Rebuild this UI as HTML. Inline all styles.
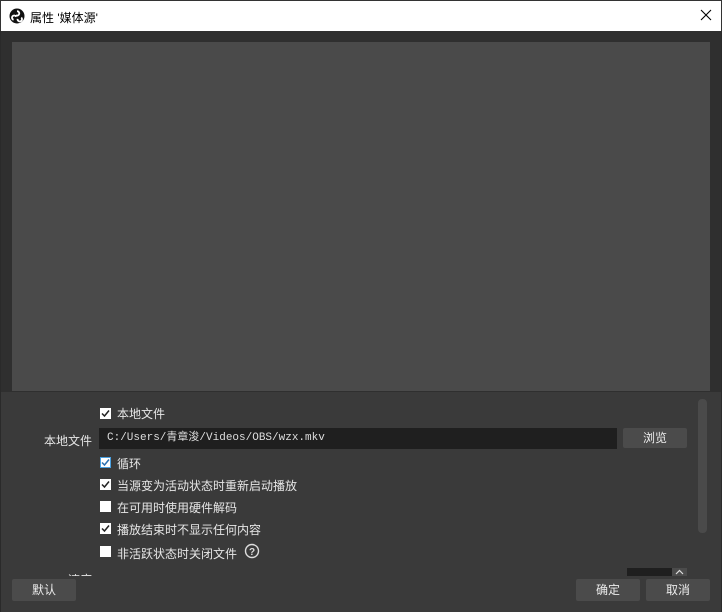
<!DOCTYPE html><html><head><meta charset="utf-8"><style>
*{margin:0;padding:0;box-sizing:border-box}
body{width:722px;height:612px;overflow:hidden;background:#3a3a3a;font-family:"Liberation Sans","Noto Sans CJK SC",sans-serif;font-size:12px;color:#e6e6e6;position:relative}
.a{position:absolute}
.cb{position:absolute;left:100px;width:11px;height:11px;background:#fff}
.cb svg{position:absolute;left:0;top:0}
.lbl{position:absolute;left:117px;font-size:12px;line-height:14px}
.btn{position:absolute;background:#4b4b4b;border-radius:2px;text-align:center;font-size:12px;line-height:22px;color:#ececec}
</style></head><body>
<div class="a" style="left:0;top:0;width:722px;height:31px;background:#fff;border:1px solid #333;border-bottom:none"></div>
<svg class="a" style="left:9px;top:8px" width="16" height="16" viewBox="0 0 16 16"><circle cx="8" cy="8" r="7.5" fill="#111"/><path d="M8 3.2a2.2 2.2 0 1 1-1.2 4M4.6 11.8a2.2 2.2 0 1 1 2.6-3M12.2 9.6a2.2 2.2 0 1 1-3.6 1.3" stroke="#fff" stroke-width="1.8" fill="none"/></svg>
<div class="a" style="left:30px;top:9px;font-size:12px;color:#000">属性 '媒体源'</div>
<svg class="a" style="left:700px;top:9px" width="12" height="12" viewBox="0 0 12 12"><path d="M1 1L11 11M11 1L1 11" stroke="#000" stroke-width="1.1"/></svg>
<div class="a" style="left:0;top:31px;width:722px;height:581px;background:#3a3a3a;border-left:1px solid #2a2a2a;border-right:1px solid #2a2a2a"></div>
<div class="a" style="left:1px;top:31px;width:720px;height:361px;background:#2f2f2f"></div>
<div class="a" style="left:12px;top:42px;width:698px;height:349px;background:#4a4a4a"></div>
<div class="cb" style="top:408px"><svg width="11" height="11"><path d="M2 5.5L4.5 8L9 2.5" stroke="#222" stroke-width="1.5" fill="none"/></svg></div>
<div class="lbl" style="top:407px">本地文件</div>
<div class="a" style="left:44px;top:432px">本地文件</div>
<div class="a" style="left:99px;top:428px;width:518px;height:21px;background:#1f1f1f;font-family:'Liberation Mono','Noto Sans CJK SC',monospace;font-size:11px;line-height:21px;padding-left:8px;color:#ddd">C:/Users/青章浚/Videos/OBS/wzx.mkv</div>
<div class="btn" style="left:623px;top:428px;width:64px;height:20px;line-height:20px">浏览</div>
<div class="cb" style="top:457px;border:1px solid #4aa0e0"><svg width="11" height="11" style="left:-1px;top:-1px"><path d="M2 5.5L4.5 8L9 2.5" stroke="#2a6fb0" stroke-width="1.5" fill="none"/></svg></div>
<div class="lbl" style="top:457px">循环</div>
<div class="cb" style="top:479px"><svg width="11" height="11"><path d="M2 5.5L4.5 8L9 2.5" stroke="#222" stroke-width="1.5" fill="none"/></svg></div>
<div class="lbl" style="top:479px">当源变为活动状态时重新启动播放</div>
<div class="cb" style="top:501px"></div>
<div class="lbl" style="top:501px">在可用时使用硬件解码</div>
<div class="cb" style="top:523px"><svg width="11" height="11"><path d="M2 5.5L4.5 8L9 2.5" stroke="#222" stroke-width="1.5" fill="none"/></svg></div>
<div class="lbl" style="top:523px">播放结束时不显示任何内容</div>
<div class="cb" style="top:546px"></div>
<div class="lbl" style="top:547px">非活跃状态时关闭文件</div>
<svg class="a" style="left:244px;top:543px" width="16" height="16" viewBox="0 0 16 16"><circle cx="8" cy="8" r="6.5" stroke="#ddd" stroke-width="1.4" fill="none"/><text x="8" y="12" text-anchor="middle" font-size="10" font-weight="bold" fill="#ddd" font-family="Liberation Sans">?</text></svg>
<div class="a" style="left:0;top:566px;width:722px;height:10px;overflow:hidden"><div class="a" style="left:68px;top:5px;font-size:12px">速度</div><div class="a" style="left:627px;top:2px;width:45px;height:12px;background:#1f1f1f"></div><div class="a" style="left:672px;top:2px;width:15px;height:12px;background:#4b4b4b"></div><svg class="a" style="left:675px;top:3px" width="9" height="6"><path d="M1 5L4.5 1.5L8 5" stroke="#ddd" stroke-width="1.2" fill="none"/></svg></div>
<div class="a" style="left:698px;top:399px;width:9px;height:134px;background:#4a4a4a;border-radius:4px"></div>
<div class="btn" style="left:12px;top:579px;width:64px;height:22px">默认</div>
<div class="btn" style="left:576px;top:579px;width:64px;height:22px">确定</div>
<div class="btn" style="left:646px;top:579px;width:64px;height:22px">取消</div>
</body></html>
